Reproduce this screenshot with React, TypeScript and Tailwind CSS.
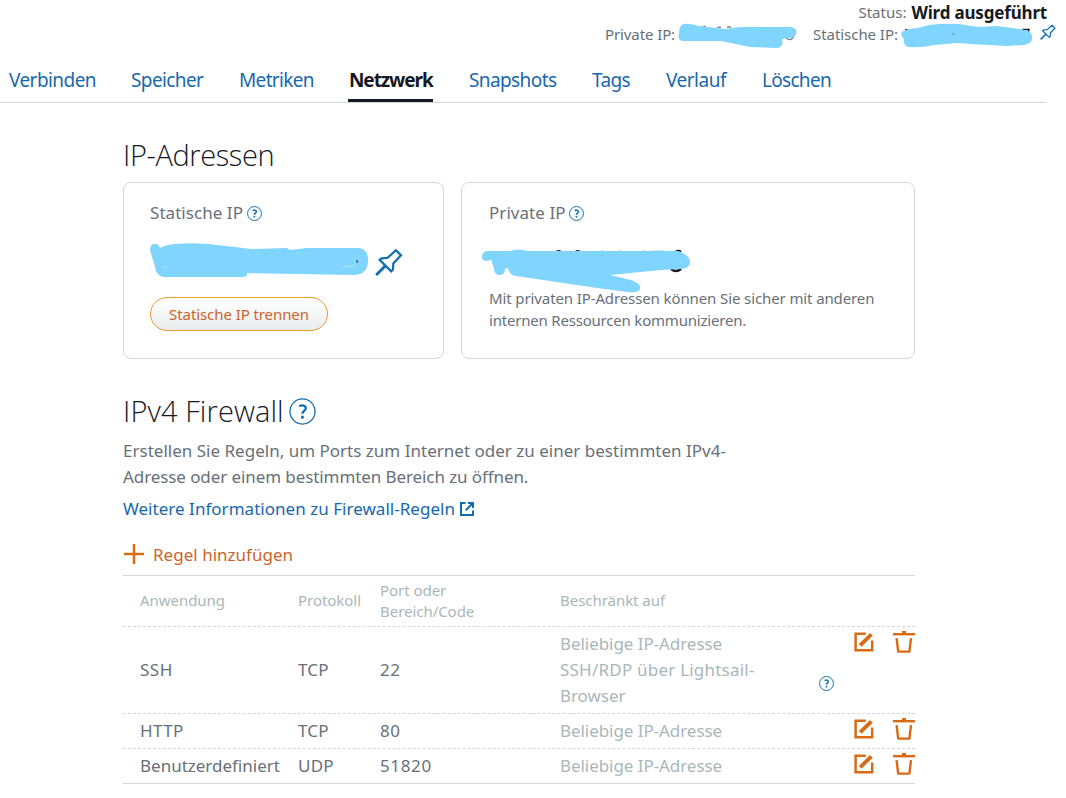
const LINK = "#0f6cb0";

function Help({ className = "size-[15px]", thin = false }: { className?: string; thin?: boolean }) {
  return (
    <svg className={`shrink-0 ${className}`} viewBox="0 0 28 28" fill="none" stroke={LINK}>
      <circle cx="14" cy="14" r="13" strokeWidth={thin ? 1.3 : 1.8} />
      <path d="M10.6 8.6c2.6-1.6 6.8-1.1 6.8 2.1 0 2.7-3.5 2.8-3.5 5.6" strokeWidth={thin ? 2.3 : 2.8} />
      <path d="M13.9 18.4v3" strokeWidth={thin ? 2.8 : 3.2} />
    </svg>
  );
}

function Pin({ className }: { className: string }) {
  return (
    <svg className={`shrink-0 ${className}`} viewBox="0 0 28 28" fill="none" stroke={LINK} strokeWidth="2.2" strokeLinejoin="miter">
      <path d="M20.9 2.2 26 7.3 18.3 15.4 18 21.4 16.2 23.4 4.6 11.9 6.6 10.3 12.6 9.8Z" />
      <path d="M10.6 17.6 1.2 27" strokeWidth="2.8" />
    </svg>
  );
}

function Edit() {
  return (
    <svg className="h-5 w-[21px]" viewBox="0 0 21 20" fill="none" stroke="#d76b16" strokeWidth="2.5">
      <path d="M11.8 1.7H1.6v16.6h16.6V8.6" />
      <path d="M6.2 13.3 17.4 2.3" strokeWidth="3.8" />
    </svg>
  );
}

function Trash() {
  return (
    <svg className="h-[22px] w-[22px]" viewBox="0 0 22 22" fill="none" stroke="#d76b16" strokeWidth="2.4">
      <path d="M0 3.2h22" />
      <path d="M9 1.2h4" />
      <path d="M3.6 7.2l1.6 13.4h11.2L18 7.2" strokeLinejoin="round" />
    </svg>
  );
}

const tabs = [
  { label: "Verbinden", cls: "w-[122px] tracking-[-0.56px]" },
  { label: "Speicher", cls: "w-[108px] tracking-[-0.6px]" },
  { label: "Metriken", cls: "w-[110px] tracking-[-0.65px]" },
  { label: "Netzwerk", cls: "w-[120px] tracking-[-1.08px]", active: true },
  { label: "Snapshots", cls: "w-[123px] tracking-[-0.6px]" },
  { label: "Tags", cls: "w-[74px] tracking-[-0.6px]" },
  { label: "Verlauf", cls: "w-[96px] tracking-[-0.5px]" },
  { label: "Löschen", cls: "w-[90px] tracking-[-0.7px]" },
];

const cols = "grid grid-cols-[158px_82px_180px_259px_35px_78px] pl-[17px]";

const rules = [
  { app: "SSH", proto: "TCP", port: "22", browser: true, h: "h-[87px]", border: "border-dashed", appCls: "tracking-[0.5px]" },
  { app: "HTTP", proto: "TCP", port: "80", browser: false, h: "h-[35px]", border: "border-dashed", appCls: "tracking-[0.4px]" },
  { app: "Benutzerdefiniert", proto: "UDP", port: "51820", browser: false, h: "h-[35px]", border: "border-solid", appCls: "tracking-normal" },
];

export default function App() {
  return (
    <div className="h-[798px] w-[1066px] overflow-hidden bg-white font-['Noto_Sans',sans-serif] text-[#687078] whitespace-nowrap">
      <header className="h-[58px] pt-[2px]">
        <div className="flex h-[22px] items-center justify-end gap-[5px] pr-[19px] text-[15px]">
          <span className="mb-px">Status:</span>
          <b className="text-[17px] font-bold tracking-[-0.18px] text-[#16191f]">Wird ausgeführt</b>
        </div>
        <div className="flex h-[22px] items-center pl-[605px] text-[15px]">
          <span className="mb-[2px] w-[72px] tracking-[-0.1px]">Private IP:</span>
          <svg className="mt-[2px] h-[26px] w-[121px] shrink-0" viewBox="0 0 121 26" fill="none">
            <path d="M26 3.5h3M40 5q2-1.5 4-.5M50 4.5q2-1.5 4 0M109 15q5 4 8-2" stroke="#7b828a" strokeWidth="1.4" />
            <path d="M6 1Q12 0 22 3L48 6Q65 3 80 4L113 4Q121 5 119 11 118 15 112 15L105 16Q107 23 101 25L73 24 44 18 20 18 5 18Q0 16 2 11 2 3 6 1Z" fill="#80d5ff" />
          </svg>
          <span className="mb-[2px] ml-[15px] w-[87px] tracking-[-0.05px]">Statische IP:</span>
          <svg className="mt-[2px] h-[26px] w-[134px] shrink-0" viewBox="0 0 134 26" fill="none">
            <path d="M5 7h3M122 6.5h7l-1 3" stroke="#16191f" strokeWidth="1.5" />
            <path d="M3 8Q10 5 18 5L29 2Q44 0 59 1L78 4 96 3 119 6Q132 7 132 14 133 20 124 22L107 23 71 21 57 20 34 22Q21 25 9 24 3 23 4 16-1 12 3 8Z" fill="#80d5ff" />
            <path d="M52 11h3" stroke="#4a91b5" />
          </svg>
          <Pin className="mb-[6px] ml-[6px] size-[16px]" />
        </div>
      </header>

      <nav className="flex h-[45px] w-[1047px] border-b border-[#d2d5d6] pl-[9px] text-[19px] text-[#1768ac]">
        {tabs.map((t) => (
          <div key={t.label} className={t.cls}>
            {t.active ? (
              <span className="-ml-px flex h-[44px] w-[85px] items-center border-b-[3px] border-[#16191f] pl-px pt-[3px] font-bold text-[#16191f]">{t.label}</span>
            ) : (
              <a className="flex h-[44px] items-center">{t.label}</a>
            )}
          </div>
        ))}
      </nav>

      <main className="w-[915px] pl-[123px]">
        <h1 className="flex h-[79px] items-end pb-[7px] font-['Open_Sans',sans-serif] text-[29px] leading-[40px] font-light tracking-[-0.4px] text-[#16191f]">IP-Adressen</h1>

        <section className="flex gap-[17px]">
          <div className="h-[177px] w-[321px] rounded-lg border border-[#d2d8d8] pl-[26px] pt-[18px]">
            <h2 className="flex h-6 items-center gap-1 text-[17px] tracking-[0.05px]">Statische IP <Help /></h2>
            <div className="mt-[17px] flex h-[38px] items-start">
              <svg className="h-[38px] w-[219px]" viewBox="0 0 219 38" fill="none">
                <path d="M0 8Q0 2 4 2 8 1 10 6 17 2 27 2 50 0 76 4L101 7 137 6 140 8 157 6 209 6Q218 7 218 18 218 32 205 33L97 31Q98 35 92 35L14 35Q6 34 5 25Z" fill="#80d5ff" />
                <path d="M206 18q2 6-5 6l-8 1M13 25h3" stroke="#b9e8ff" />
                <path d="M207 18v3" stroke="#16191f" />
              </svg>
              <Pin className="ml-[6px] mt-[6px] size-[28px]" />
            </div>
            <button className="mt-[17px] flex h-[34px] w-[178px] items-center justify-center rounded-full border border-[#e79a2b] bg-linear-to-b from-white to-[#eaeded] text-[15px] tracking-[-0.08px] text-[#cb642c]">Statische IP trennen</button>
          </div>

          <div className="relative h-[177px] w-[454px] rounded-lg border border-[#d2d8d8] pl-[27px] pt-[18px]">
            <h2 className="flex h-6 items-center gap-[3px] text-[17px] tracking-[0.05px]">Private IP <Help /></h2>
            <div className="mt-[62px] text-[15px] leading-[22px]">
              <p className="tracking-[-0.11px]">Mit privaten IP-Adressen können Sie sicher mit anderen</p>
              <p className="tracking-[-0.2px]">internen Ressourcen kommunizieren.</p>
            </div>
            <svg className="absolute left-[18px] top-[64px] h-[48px] w-[213px]" viewBox="0 0 213 48" fill="none">
              <path d="M76 4.8q3-2 5 0M95 4.8q3-2 5 0M195 4.6q4-2 6 0" stroke="#16191f" strokeWidth="1.6" />
              <path d="M121 4h3M138 4h3M162 4h3M173 4h12" stroke="#a5c5d4" strokeWidth="1.2" />
              <path d="M191 22q5 4 10 0" stroke="#16191f" strokeWidth="2.4" />
              <path d="M7 4 30 4Q37 1 48 4L198 4Q206 6 210 13 211 22 200 22L181 23 130 28 151 33Q162 37 160 42 158 46 148 45L117 41 36 29Q29 28 28 21L25 22Q25 28 19 28 14 28 14 21L12 16 12 13 6 14Q1 13 2 9 2 5 7 4Z" fill="#80d5ff" />
            </svg>
          </div>
        </section>

        <section>
          <h1 className="mt-[32px] flex h-[40px] items-center gap-[5px] font-['Open_Sans',sans-serif] text-[29px] font-light tracking-[0.1px] text-[#16191f]">IPv4 Firewall <Help className="size-[27px]" thin /></h1>
          <div className="mt-[7px] text-[17px] leading-[26px]">
            <p className="tracking-[0.01px]">Erstellen Sie Regeln, um Ports zum Internet oder zu einer bestimmten IPv4-</p>
            <p className="tracking-[-0.09px]">Adresse oder einem bestimmten Bereich zu öffnen.</p>
          </div>
          <a className="mt-[6px] flex h-[26px] items-center gap-[5px] text-[17px] tracking-[0.03px] text-[#1768ac]">
            Weitere Informationen zu Firewall-Regeln
            <svg className="mb-px size-[14px]" viewBox="0 0 14 14" fill="none" stroke={LINK} strokeWidth="2">
              <path d="M5.5 1H1v12h12V8.5M8 1h5v5M13 1 5.8 8.2" />
            </svg>
          </a>
          <button className="mt-[18px] flex h-[28px] items-center gap-[9px] text-[17px] tracking-[0.02px] text-[#cb642c]">
            <svg className="ml-px size-5" viewBox="0 0 20 20" stroke="#d76b16" strokeWidth="2.5"><path d="M10 0v20M0 10h20" /></svg>
            <span className="mt-[2px]">Regel hinzufügen</span>
          </button>
        </section>

        <section className="mt-[7px] border-t border-[#d2d8d8]">
          <div className={`${cols} h-[51px] items-center border-b border-dashed border-[#d2d8d8] text-[15px] leading-[21px] tracking-[-0.04px] text-[#aab7b8]`}>
            <span className="mb-px">Anwendung</span>
            <span className="mb-px">Protokoll</span>
            <span>Port oder<br />Bereich/Code</span>
            <span className="mb-px">Beschränkt auf</span>
          </div>
          {rules.map((r) => (
            <div key={r.app} className={`${cols} ${r.h} ${r.border} items-center border-b border-[#d2d8d8] text-[17px] leading-[26px]`}>
              <span className={r.appCls}>{r.app}</span>
              <span className="tracking-[0.2px]">{r.proto}</span>
              <span className="tracking-[0.65px]">{r.port}</span>
              <span className="tracking-[-0.06px] text-[#aab7b8]">
                Beliebige IP-Adresse
                {r.browser && <><br /><span className="tracking-[0.22px]">SSH/RDP über Lightsail-</span><br />Browser</>}
              </span>
              <span>{r.browser && <Help className="mt-[26px] size-[15px]" />}</span>
              <span className="flex items-center gap-[18px] self-start pt-[4px]"><Edit /><Trash /></span>
            </div>
          ))}
        </section>
      </main>
    </div>
  );
}
